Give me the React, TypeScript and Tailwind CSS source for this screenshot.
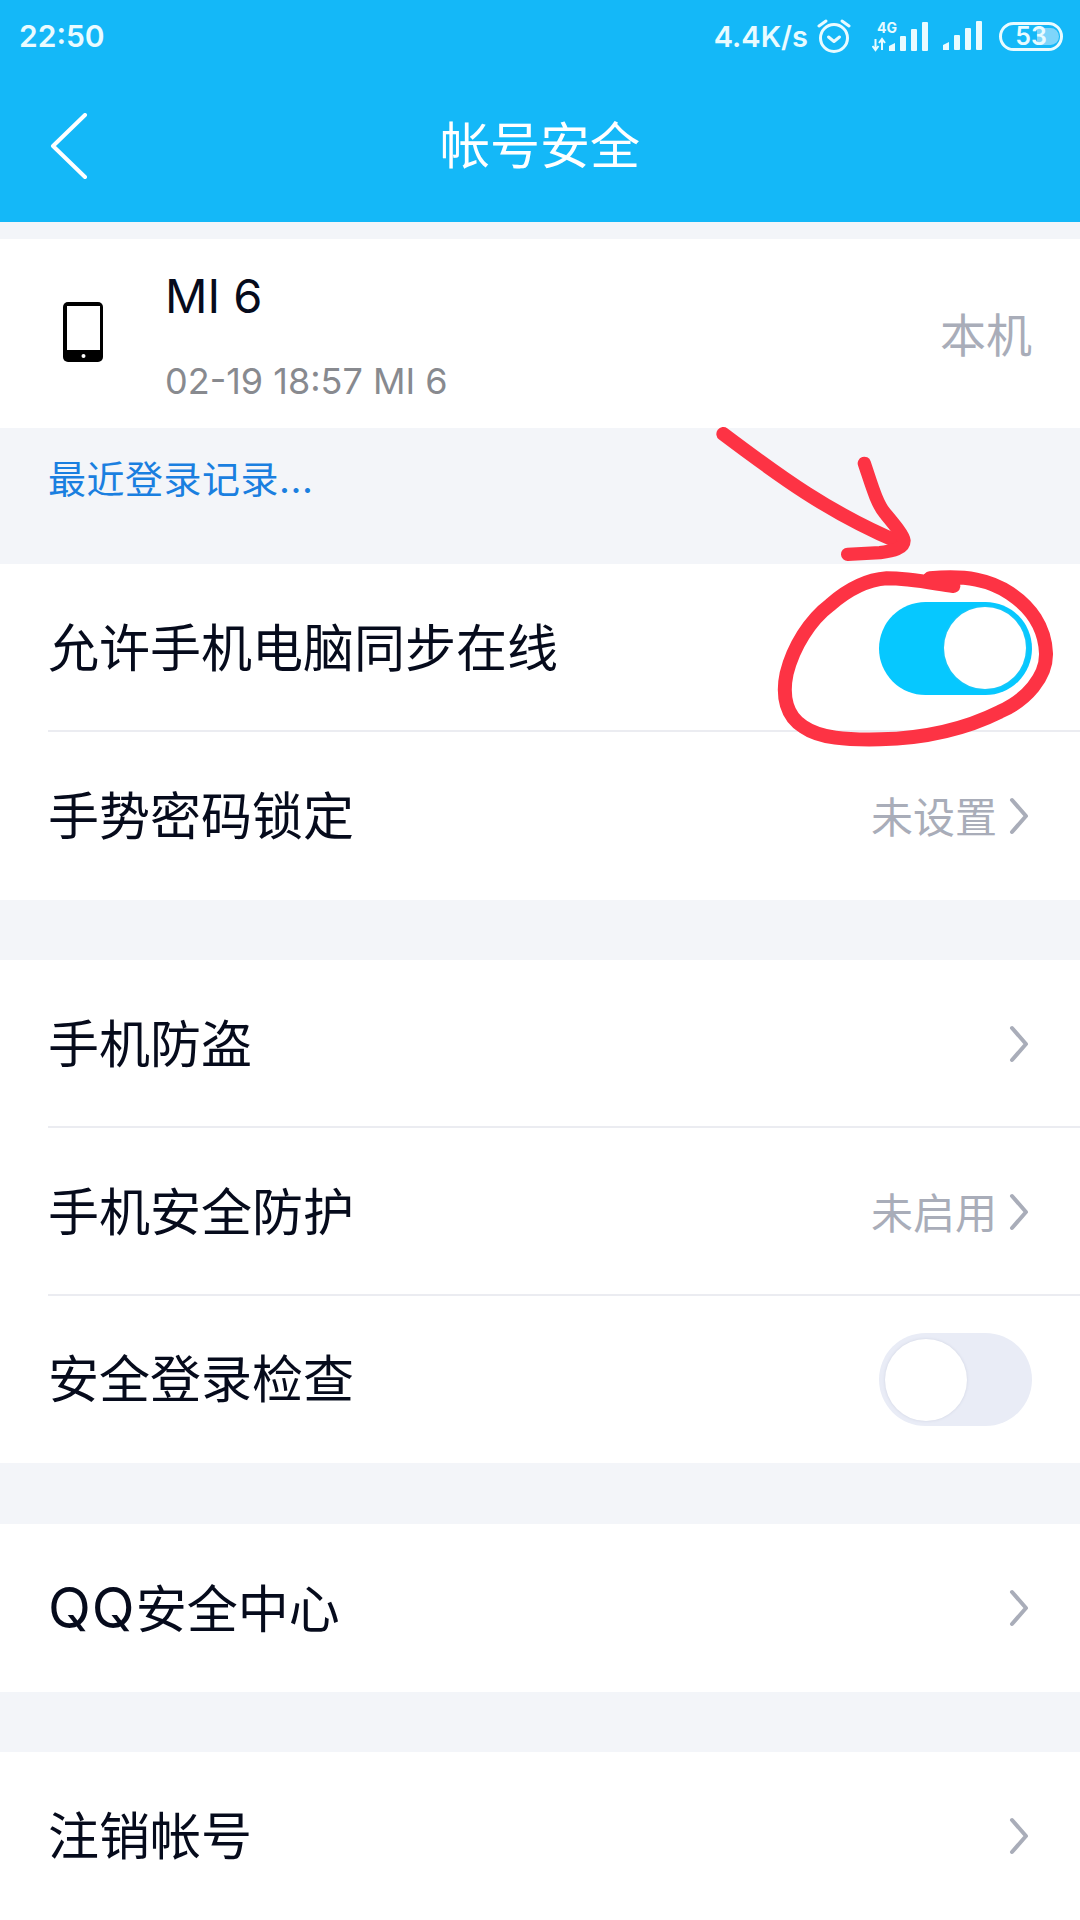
import type { ReactNode } from 'react'

const cjk = { fontFamily: '"Inter", "Noto Sans CJK SC", sans-serif' }

function Chevron() {
  return (
    <svg width="20" height="38" viewBox="0 0 20 38" fill="none" className="ml-[12px]">
      <path d="M3 3 L17 19 L3 35" stroke="#a9adb9" strokeWidth="4" strokeLinecap="round" strokeLinejoin="round" />
    </svg>
  )
}

function Toggle({ on }: { on: boolean }) {
  return (
    <div
      className={`flex items-center w-[153px] h-[93px] rounded-full px-[6px] ${
        on ? 'bg-[#06c8ff] justify-end' : 'bg-[#e9ecf6] justify-start'
      }`}
    >
      <div
        className={`w-[82px] h-[82px] rounded-full bg-white ${
          on ? 'shadow-[0_0_3px_#3cc4ec]' : 'shadow-[0_0_3px_#cfd3e2]'
        }`}
      />
    </div>
  )
}

interface RowProps {
  label: ReactNode
  value?: string
  toggle?: boolean
  divider?: boolean
  height?: string
}

function Row({ label, value, toggle, divider = false, height = 'h-[168px]' }: RowProps) {
  return (
    <div
      className={`relative flex items-center justify-between bg-white pl-[48px] ${height} ${
        toggle !== undefined ? 'pr-[48px]' : 'pr-[51px]'
      }`}
    >
      <span className="text-[51px] leading-none text-[#060b1c] font-normal">{label}</span>
      {toggle !== undefined ? (
        <Toggle on={toggle} />
      ) : (
        <div className="flex items-center">
          {value && <span className="mt-[4px] text-[42px] leading-none text-[#a9adb9]">{value}</span>}
          <Chevron />
        </div>
      )}
      {divider && <div className="absolute left-[48px] right-0 bottom-0 h-[2px] bg-[#ebecf1]" />}
    </div>
  )
}

function SignalBars() {
  return (
    <>
      <path d="M0 29 L0 24 L6 21 V29 Z" />
      <rect x="11" y="14" width="6" height="15" rx="1" />
      <rect x="22" y="7" width="6" height="22" rx="1" />
      <rect x="33" y="0" width="6" height="29" rx="1" />
    </>
  )
}

function StatusIcons() {
  return (
    <div className="flex items-center">
      <span className="text-[29px] leading-none font-semibold whitespace-nowrap text-[#e9fbff]">4.4K/s</span>
      <svg width="34" height="34" viewBox="0 0 34 34" fill="none" className="ml-[9px]">
        <circle cx="17" cy="19" r="13.5" stroke="#e9fbff" strokeWidth="3" />
        <path d="M11.5 18 L17 22.5 L22.5 18" stroke="#e9fbff" strokeWidth="3" strokeLinecap="round" strokeLinejoin="round" />
        <path d="M2 7 L9 2 M32 7 L25 2" stroke="#e9fbff" strokeWidth="3" strokeLinecap="round" />
      </svg>
      <div className="relative ml-[21px] h-[32px] w-[57px]">
        <svg width="57" height="32" viewBox="0 0 57 32" fill="#e9fbff">
          <path d="M3.5 19 V30 M0.5 26 L3.5 30 L6.5 26 M10 30 V19 M7 23 L10 19 L13 23" fill="none" stroke="#e9fbff" strokeWidth="2" />
          <g transform="translate(17 2)">
            <SignalBars />
          </g>
        </svg>
        <span className="absolute left-[5px] top-[1px] text-[14px] leading-none font-bold text-[#e9fbff]">4G</span>
      </div>
      <svg width="40" height="30" viewBox="0 0 40 30" className="ml-[14px]" fill="#e9fbff">
        <SignalBars />
      </svg>
      <div className="relative ml-[16px] flex h-[29px] w-[64px] items-center justify-center rounded-full border-[3px] border-[#e9fbff]">
        <div className="absolute left-[35px] top-[3px] h-[17px] w-[22px] rounded-r-full bg-[#7fd5fa]" />
        <span className="relative text-[25px] leading-none font-semibold text-[#e9fbff]">53</span>
      </div>
    </div>
  )
}

function Annotation() {
  return (
    <svg
      width="400"
      height="360"
      viewBox="0 0 1200 1080"
      fill="none"
      className="absolute left-[680px] top-[410px]"
    >
      <g stroke="#fd3344" strokeLinecap="round" strokeLinejoin="round">
        <path strokeWidth="42" d="M130 72 C 300 200, 450 310, 660 398" />
        <path
          strokeWidth="40"
          d="M553 160 C 575 225, 590 280, 615 310 C 640 340, 670 375, 672 392 C 672 415, 640 422, 600 428 L 503 433"
        />
        <path
          strokeWidth="42"
          d="M820 528 C 760 520, 690 505, 620 505 C 550 510, 490 550, 450 585 C 390 630, 340 710, 320 790 C 305 860, 320 920, 370 950 C 420 985, 500 990, 600 988 C 720 985, 850 960, 960 905 C 1040 870, 1100 800, 1098 730 C 1095 650, 1050 590, 990 550 C 930 510, 860 495, 750 505"
        />
      </g>
    </svg>
  )
}

export default function App() {
  return (
    <div className="relative w-[1080px] h-[1920px] overflow-hidden bg-[#f3f5f9]" style={cjk}>
      <header className="h-[222px] bg-[#14b8f8] flex flex-col">
        <div className="flex items-center justify-between h-[72px] pl-[19px] pr-[17px]">
          <span className="text-[30px] leading-none font-semibold text-[#e9fbff]">22:50</span>
          <StatusIcons />
        </div>
        <div className="relative flex items-center justify-center flex-1 pb-[2px]">
          <svg width="40" height="68" viewBox="0 0 40 68" fill="none" className="absolute left-[50px] top-[41px]">
            <path d="M35 2 L3 33 L35 64" stroke="#fff" strokeWidth="4" strokeLinecap="round" strokeLinejoin="round" />
          </svg>
          <h1 className="text-[50px] leading-none font-normal text-white">帐号安全</h1>
        </div>
      </header>

      <section className="mt-[17px] h-[189px] bg-white flex items-center pl-[63px] pr-[48px]">
        <svg width="40" height="60" viewBox="0 0 40 60" className="mb-[3px]">
          <rect width="40" height="60" rx="5" fill="#000" />
          <rect x="4" y="4" width="33" height="44" fill="#fff" />
          <circle cx="20.5" cy="54" r="2" fill="#fff" />
        </svg>
        <div className="ml-[62px] mt-[3px] flex flex-col flex-1">
          <span className="text-[47px] leading-none text-[#060b1c]">MI 6</span>
          <span className="mt-[44px] text-[36px] leading-none text-[#888a8f]">02-19 18:57 MI 6</span>
        </div>
        <span className="mt-[2px] text-[46px] leading-none text-[#a9adb9]">本机</span>
      </section>

      <div className="h-[136px] pl-[48px] pt-[32px] text-[38px] leading-none tracking-[0.5px] text-[#1a7fe0]">最近登录记录...</div>

      <Row label="允许手机电脑同步在线" toggle={true} divider />
      <Row label="手势密码锁定" value="未设置" />

      <div className="mt-[60px]">
        <Row label="手机防盗" divider />
        <Row label="手机安全防护" value="未启用" divider />
        <Row label="安全登录检查" toggle={false} height="h-[167px]" />
      </div>

      <div className="mt-[61px]">
        <Row label={<><span className="text-[56px] tracking-[1px]">QQ</span>安全中心</>} />
      </div>

      <div className="mt-[60px]">
        <Row label="注销帐号" />
      </div>

      <Annotation />
    </div>
  )
}
